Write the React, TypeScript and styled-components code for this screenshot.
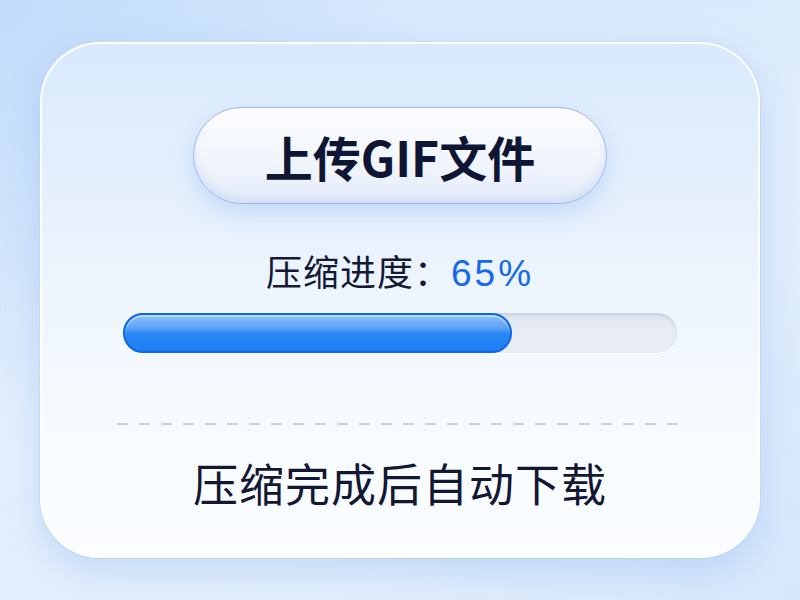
import styled, { createGlobalStyle } from 'styled-components';

const GlobalStyle = createGlobalStyle`
  html,
  body {
    margin: 0;
    padding: 0;
  }

  body {
    font-family: 'Noto Sans CJK SC', 'Noto Sans', sans-serif;
    color: #141a36;
  }
`;

const Page = styled.main`
  width: 800px;
  height: 600px;
  display: flex;
  align-items: center;
  justify-content: center;
  overflow: hidden;
  background:
    radial-gradient(circle at 0% 0%, #c2dcfa 0%, rgba(194, 220, 250, 0) 45%),
    radial-gradient(circle at 100% 100%, #d6e7fb 0%, rgba(214, 231, 251, 0) 50%),
    linear-gradient(170deg, #d6e8fc 0%, #e4effc 55%, #e1edfc 100%);
`;

const Card = styled.section`
  box-sizing: border-box;
  width: 720px;
  height: 516px;
  padding: 63px 81px 0;
  display: flex;
  flex-direction: column;
  align-items: center;
  border-radius: 60px;
  border: 2px solid rgba(255, 255, 255, 0.9);
  background: linear-gradient(180deg, #d9e9fc 0%, #eaf3fd 40%, #f7fbff 75%, #fbfdff 100%);
  box-shadow:
    0 12px 34px rgba(110, 160, 235, 0.28),
    0 0 0 1px rgba(200, 222, 250, 0.6);
`;

const UploadButton = styled.button`
  box-sizing: border-box;
  width: 414px;
  height: 97px;
  margin-bottom: 45px;
  border-radius: 49px;
  border: 1.5px solid #9ab8ea;
  background: linear-gradient(180deg, #fcfdff 0%, #f1f5fd 55%, #e5ecf9 100%);
  box-shadow:
    0 10px 22px rgba(100, 150, 230, 0.25),
    inset 0 -5px 8px rgba(170, 196, 238, 0.35),
    inset 0 3px 3px #ffffff;
  font-family: 'Noto Sans CJK SC', 'Noto Sans', sans-serif;
  font-size: 48px;
  font-weight: 700;
  color: #0f1633;
  cursor: pointer;
`;

const ProgressLabel = styled.div`
  font-size: 36px;
  line-height: 43px;
  letter-spacing: 1px;
  color: #141a36;
  margin-bottom: 18px;
`;

const Percent = styled.span`
  font-family: 'Liberation Sans', 'Noto Sans CJK SC', sans-serif;
  font-size: 37px;
  letter-spacing: 3px;
  color: #1668ec;
`;

const Track = styled.div`
  align-self: stretch;
  height: 40px;
  margin-bottom: 70px;
  border-radius: 20px;
  background: linear-gradient(180deg, #dde4ee 0%, #e7ecf3 40%, #e9eef5 100%);
  box-shadow:
    inset 0 2px 3px rgba(150, 170, 200, 0.35),
    0 1px 0 #ffffff;
`;

const Fill = styled.div`
  box-sizing: border-box;
  height: 100%;
  border-radius: 20px;
  border: 2px solid #0b66ea;
  background: linear-gradient(
    180deg,
    #8ec0fa 0%,
    #5ea3f8 35%,
    #2a86f5 52%,
    #1d7ef4 100%
  );
  box-shadow: inset 0 2px 1px rgba(255, 255, 255, 0.45);
`;

const Divider = styled.div`
  align-self: stretch;
  height: 2px;
  margin: 0 -6px 31px;
  background-image: repeating-linear-gradient(
    to right,
    #c6d3e6 0 11px,
    transparent 11px 22px
  );
`;

const Note = styled.p`
  margin: 0;
  font-size: 45px;
  line-height: 54px;
  letter-spacing: 1px;
  color: #121834;
`;

const progress = 65;

export default function App() {
  return (
    <>
      <GlobalStyle />
      <Page>
        <Card>
          <UploadButton type='button'>上传GIF文件</UploadButton>
          <ProgressLabel>
            压缩进度：<Percent>{progress}%</Percent>
          </ProgressLabel>
          <Track>
            <Fill style={{ width: `calc(${progress}% + 29px)` }} />
          </Track>
          <Divider />
          <Note>压缩完成后自动下载</Note>
        </Card>
      </Page>
    </>
  );
}
